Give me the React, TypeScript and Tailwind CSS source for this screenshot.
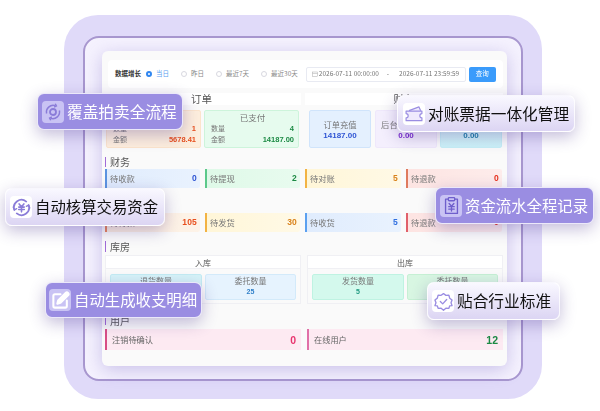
import { type ReactNode } from "react";

const numFont = "font-['Liberation_Sans',sans-serif] font-bold";

function SectionTitle({ text, className }: { text: string; className: string }) {
    return (
        <div className={`flex items-center ${className}`}>
            <div className="w-px h-full bg-[#a06bd8]" />
            <div className="ml-[4px] text-[10px] leading-none text-[#555]">{text}</div>
        </div>
    );
}

function Stat({ label, value, box, bar, color }: { label: string; value: string; box: string; bar: string; color: string }) {
    return (
        <div className={`flex items-center justify-between h-full border-l-2 pl-[3px] pr-[3px] rounded-r-[2px] ${box} ${bar}`}>
            <span className="text-[8.3px] leading-none text-[#777]">{label}</span>
            <span className={`text-[8.5px] tracking-[0.2px] leading-none ${numFont} ${color}`}>{value}</span>
        </div>
    );
}

function Radio({ text, active }: { text: string; active?: boolean }) {
    return (
        <div className="flex items-center gap-[4px]">
            {active ? (
                <div className="w-[6px] h-[6px] rounded-full border-2 border-[#2f86f0] bg-white" />
            ) : (
                <div className="w-[6px] h-[6px] rounded-full border border-[#d8d8e0] bg-white" />
            )}
            <span className={active ? "text-[6.5px] text-[#5aa0f0]" : "text-[6.5px] text-[#888]"}>{text}</span>
        </div>
    );
}

function Badge({ text, icon, className, purple }: { text: string; icon: ReactNode; className: string; purple?: boolean }) {
    return (
        <div
            className={`absolute flex items-center rounded-[7px] border border-white/80 shadow-[0_5px_16px_rgba(70,50,140,0.32)] ${
                purple ? "bg-[#9a8de2] text-white" : "bg-linear-to-b from-[#f9f8ff] to-[#dcd5f3] text-[#111]"
            } ${className}`}
        >
            <div
                className={`flex items-center justify-center w-[22px] h-[22px] rounded-[4px] ${
                    purple ? "bg-[#c9c3f4]" : "bg-white"
                }`}
            >
                {icon}
            </div>
            <span className="ml-[3px] leading-none whitespace-nowrap">{text}</span>
        </div>
    );
}

function CycleIcon() {
    return (
        <svg width="18" height="18" viewBox="0 0 24 24" fill="none" stroke="#8a7cd8" strokeWidth="2">
            <circle cx="12" cy="12" r="4" strokeWidth="2.4" />
            <path d="M3.5 14a9 9 0 0 1 11.5-10.5" />
            <path d="M20.5 10a9 9 0 0 1-11.5 10.5" />
            <path d="M15 1l1.5 3-3 1.5" />
            <path d="M9 23l-1.5-3 3-1.5" />
        </svg>
    );
}

function WalletIcon() {
    return (
        <svg width="20" height="20" viewBox="0 0 24 24" fill="#efeafd" stroke="#9a8de2" strokeWidth="1.4" strokeLinejoin="round">
            <path d="M6 8 18 3.5 20 8" />
            <path d="M2.5 8.5h19v3a2.2 2.2 0 0 0 0 5V20h-19v-3.5a2.2 2.2 0 0 0 0-5z" />
        </svg>
    );
}

function MoneyIcon() {
    return (
        <svg width="19" height="19" viewBox="0 0 24 24" fill="none" stroke="#8a7cd8" strokeWidth="2.2" strokeLinecap="round">
            <path d="M3 15a9.5 9.5 0 0 1 15-10.5" />
            <path d="M21 9a9.5 9.5 0 0 1-15 10.5" />
            <path d="M9 7.5l3 3.5 3-3.5M8.5 11.5h7M8.5 14.5h7M12 11v6.5" strokeWidth="2" />
            <path d="M1.5 11.5 3 15l3-1.5M22.5 12.5 21 9l-3 1.5" strokeWidth="1.6" />
        </svg>
    );
}

function ClipboardIcon() {
    return (
        <svg width="19" height="19" viewBox="0 0 24 24" fill="none" stroke="#6f5fcc" strokeWidth="1.7" strokeLinecap="round" strokeLinejoin="round">
            <path d="M8 4H4.5v18h15V4H16" />
            <rect x="8" y="2" width="8" height="4" rx="1" />
            <path d="M9 9.5l3 3.5 3-3.5M8.5 13.5h7M8.5 16.5h7M12 13v6" />
        </svg>
    );
}

function EditIcon() {
    return (
        <svg width="19" height="19" viewBox="0 0 24 24" fill="none" stroke="#ffffff" strokeWidth="2.6" strokeLinecap="round" strokeLinejoin="round">
            <path d="M12 4H5a2 2 0 0 0-2 2v13a2 2 0 0 0 2 2h13a2 2 0 0 0 2-2v-7" />
            <path d="M18.5 2.5a2 2 0 0 1 3 3L12 15l-4 1 1-4z" fill="#ffffff" />
        </svg>
    );
}

function CheckIcon() {
    return (
        <svg width="19" height="19" viewBox="0 0 24 24" fill="none" stroke="#9a8de2" strokeWidth="1.7" strokeLinecap="round" strokeLinejoin="round">
            <path d="M12 2l3 2.3 3.8-.2 1 3.7 3 2.3-1.3 3.6 1.3 3.5-3 .3-1 3.1-3.8-.1L12 23l-3-2.5-3.8.1-1-3.1-3-.3 1.3-3.5L1.2 10l3-2.3 1-3.7 3.8.2z" />
            <path d="M8 12l3 3 5-5.5" />
        </svg>
    );
}

export default function App() {
    return (
        <div className="relative w-[600px] h-[411px] overflow-hidden bg-white pt-[15px] pl-[64px] font-['Noto_Sans_CJK_SC',sans-serif]">
            <div className="w-[478px] h-[384px] rounded-[34px] bg-[#e0daf9] pt-[21px] pl-[19px]">
                <div className="w-[440px] h-[345px] rounded-[16px] border-2 border-[#a897cf] bg-[#f5f2fe] pt-[13px] pl-[17px]">
                    <div className="flex flex-col w-[405px] h-[315px] rounded-[6px] bg-[#fafafa] pl-[3px] shadow-[0_4px_18px_rgba(110,90,190,0.32)] blur-[0.4px]">
                        {/* filter bar */}
                        <div className="flex items-center mt-[9px] ml-[3px] w-[395px] h-[28px] shrink-0 rounded-[4px] bg-white pl-[7px]">
                            <span className="w-[31px] text-[6.5px] font-bold text-[#333]">数据增长</span>
                            <div className="flex items-center gap-[12px]">
                                <Radio text="当日" active />
                                <Radio text="昨日" />
                                <Radio text="最近7天" />
                                <Radio text="最近30天" />
                            </div>
                            <div className="flex items-center ml-[8px] w-[160px] h-[15px] rounded-[2px] border border-[#e8eaf2] pl-[5px] text-[6.5px] text-[#777]">
                                <svg width="6" height="6" viewBox="0 0 12 12" fill="none" stroke="#aaa">
                                    <rect x="1" y="2" width="10" height="9" />
                                    <path d="M1 5h10" />
                                </svg>
                                <span className="ml-[1px] w-[68px]">2026-07-11 00:00:00</span>
                                <span>-</span>
                                <span className="ml-[10px]">2026-07-11 23:59:59</span>
                            </div>
                            <div className="flex items-center justify-center ml-[3px] w-[27px] h-[15px] rounded-[2px] bg-[#3a9bfb] text-[6.5px] text-white">查询</div>
                        </div>

                        {/* order and finance heads */}
                        <div className="flex gap-[4px] mt-[5px] h-[12px] shrink-0">
                            <div className="flex items-center justify-center w-[196px] bg-white text-[10.5px] text-[#555] pr-[3px]">订单</div>
                            <div className="flex items-center justify-center w-[198px] bg-white text-[10.5px] text-[#555]">财务</div>
                        </div>
                        <div className="flex mt-[5px] h-[38px] shrink-0">
                            <div className="flex flex-col ml-[1px] w-[95px] rounded-[2px] border border-[#fbe4cc] bg-[#fdeedd] pl-[6px] pr-[4px] text-[7px] text-[#777]">
                                <div className="text-center text-[8.5px] leading-[12px]">待支付</div>
                                <div className="flex justify-between leading-[11px]"><span>数量</span><span className={`text-[7.5px] ${numFont} text-[#e8501e]`}>1</span></div>
                                <div className="flex justify-between leading-[11px]"><span>金额</span><span className={`text-[7.5px] ${numFont} text-[#e8501e]`}>5678.41</span></div>
                            </div>
                            <div className="flex flex-col ml-[3px] w-[95px] rounded-[2px] border border-[#cdf4db] bg-[#e6fbee] pl-[6px] pr-[4px] text-[7px] text-[#777]">
                                <div className="text-center text-[8.5px] leading-[12px]">已支付</div>
                                <div className="flex justify-between leading-[11px]"><span>数量</span><span className={`text-[7.5px] ${numFont} text-[#1c8a44]`}>4</span></div>
                                <div className="flex justify-between leading-[11px]"><span>金额</span><span className={`text-[7.5px] ${numFont} text-[#1c8a44]`}>14187.00</span></div>
                            </div>
                            <div className="flex flex-col items-center justify-center ml-[10px] w-[62px] rounded-[2px] border border-[#d0e4fb] bg-[#e4f0fe]">
                                <span className="text-[8.3px] leading-[12px] text-[#777]">订单充值</span>
                                <span className={`text-[8px] leading-[11px] ${numFont} text-[#2f55d4]`}>14187.00</span>
                            </div>
                            <div className="flex flex-col items-center justify-center ml-[4px] w-[62px] rounded-[2px] border border-[#efe8fb] bg-[#f4effd]">
                                <span className="text-[8.3px] leading-[12px] text-[#777]">后台创建充值</span>
                                <span className={`text-[8px] leading-[11px] ${numFont} text-[#7a2bd0]`}>0.00</span>
                            </div>
                            <div className="flex flex-col items-center justify-center ml-[3px] w-[62px] rounded-[2px] border border-[#c6eff6] bg-linear-to-b from-[#e0f6fb] to-[#ccf2f8]">
                                <span className="text-[8.3px] leading-[12px] text-[#777]">累计充值</span>
                                <span className={`text-[8px] leading-[11px] ${numFont} text-[#1a7fa8]`}>0.00</span>
                            </div>
                        </div>

                        {/* finance */}
                        <SectionTitle text="财务" className="mt-[9px] h-[10px] shrink-0" />
                        <div className="grid grid-cols-[95px_95px_96px_96px] gap-x-[5px] mt-[2px] h-[19px] shrink-0">
                            <Stat label="待收款" value="0" box="bg-linear-to-r from-[#e0ecfd] to-[#e9f2fe]" bar="border-[#5b93e0]" color="text-[#2f55d4]" />
                            <Stat label="待提现" value="2" box="bg-linear-to-r from-[#dff9e8] to-[#e8fbef]" bar="border-[#5cc98a]" color="text-[#1c8a44]" />
                            <Stat label="待对账" value="5" box="bg-linear-to-r from-[#fff6d8] to-[#fff9e6]" bar="border-[#f2b344]" color="text-[#d9821a]" />
                            <Stat label="待退款" value="0" box="bg-linear-to-r from-[#fde4e2] to-[#fdeceb]" bar="border-[#df7a5e]" color="text-[#e8321e]" />
                        </div>
                        <SectionTitle text="订单" className="mt-[3px] h-[20px] shrink-0" />
                        <div className="grid grid-cols-[95px_95px_96px_96px] gap-x-[5px] mt-[2px] h-[19px] shrink-0">
                            <Stat label="待付款" value="105" box="bg-linear-to-r from-[#fdeedd] to-[#fdf3e8]" bar="border-[#e8845a]" color="text-[#e8501e]" />
                            <Stat label="待发货" value="30" box="bg-linear-to-r from-[#fff6d8] to-[#fff9e6]" bar="border-[#f2b344]" color="text-[#d9821a]" />
                            <Stat label="待收货" value="5" box="bg-linear-to-r from-[#e0ecfd] to-[#e9f2fe]" bar="border-[#5ba0f0]" color="text-[#2f6fe0]" />
                            <Stat label="待退款" value="0" box="bg-linear-to-r from-[#fde4e2] to-[#fdeceb]" bar="border-[#e0606a]" color="text-[#e8321e]" />
                        </div>

                        {/* warehouse */}
                        <SectionTitle text="库房" className="mt-[9px] h-[11px] shrink-0" />
                        <div className="flex gap-[6px] mt-[3px] h-[49px] shrink-0">
                            <div className="flex flex-col w-[196px] border border-[#f0f0f4]">
                                <div className="h-[13px] shrink-0 bg-white border-b border-[#f0f0f4] text-center text-[8px] leading-[13px] text-[#555]">入库</div>
                                <div className="flex gap-[3px] mt-[5px] pl-[4px]">
                                    <div className="flex flex-col items-center w-[92px] h-[26px] rounded-[2px] border border-[#c4ecf3] bg-[#d6f3f8] text-[8px] leading-[12px] text-[#777]">
                                        <span>退货数量</span>
                                        <span className={`text-[7px] leading-[9px] ${numFont} text-[#2a8fb0]`}>0</span>
                                    </div>
                                    <div className="flex flex-col items-center w-[91px] h-[26px] rounded-[2px] border border-[#d3eafa] bg-[#e6f3fe] text-[8px] leading-[12px] text-[#777]">
                                        <span>委托数量</span>
                                        <span className={`text-[7px] leading-[9px] ${numFont} text-[#2f7fc8]`}>25</span>
                                    </div>
                                </div>
                            </div>
                            <div className="flex flex-col w-[196px] border border-[#f0f0f4]">
                                <div className="h-[13px] shrink-0 bg-white border-b border-[#f0f0f4] text-center text-[8px] leading-[13px] text-[#555]">出库</div>
                                <div className="flex gap-[3px] mt-[5px] pl-[4px]">
                                    <div className="flex flex-col items-center w-[92px] h-[26px] rounded-[2px] border border-[#bff3e2] bg-[#d4f9ed] text-[8px] leading-[12px] text-[#777]">
                                        <span>发货数量</span>
                                        <span className={`text-[7px] leading-[9px] ${numFont} text-[#1f9a80]`}>5</span>
                                    </div>
                                    <div className="flex flex-col items-center w-[91px] h-[26px] rounded-[2px] border border-[#c6f0d4] bg-[#d8f6e2] text-[8px] leading-[12px] text-[#777]">
                                        <span>委托数量</span>
                                        <span className={`text-[7px] leading-[9px] ${numFont} text-[#1c8a44]`}>0</span>
                                    </div>
                                </div>
                            </div>
                        </div>

                        {/* users */}
                        <SectionTitle text="用户" className="mt-[12px] h-[9px] shrink-0" />
                        <div className="flex gap-[6px] mt-[4px] h-[21px] shrink-0">
                            <div className="flex items-center justify-between w-[196px] border-l-2 border-[#d84f86] bg-[#fdeaf2] pl-[5px] pr-[5px]">
                                <span className="text-[8.2px] text-[#666]">注销待确认</span>
                                <span className={`text-[10.5px] pt-[2px] ${numFont} text-[#e8346e]`}>0</span>
                            </div>
                            <div className="flex items-center justify-between w-[196px] border-l-2 border-[#e070a8] bg-[#fdeaf2] pl-[5px] pr-[5px]">
                                <span className="text-[8.2px] text-[#666]">在线用户</span>
                                <span className={`text-[10.5px] pt-[2px] ${numFont} text-[#1c8a44]`}>12</span>
                            </div>
                        </div>
                    </div>
                </div>
            </div>

            <Badge text="覆盖拍卖全流程" icon={<CycleIcon />} purple className="left-[37px] top-[93px] w-[146px] h-[37px] pl-[4px] text-[15.7px]" />
            <Badge text="对账票据一体化管理" icon={<WalletIcon />} className="left-[397px] top-[95px] w-[178px] h-[37px] pl-[5px] text-[15.7px]" />
            <Badge text="自动核算交易资金" icon={<MoneyIcon />} className="left-[5px] top-[188px] w-[160px] h-[38px] pl-[4px] text-[15.4px]" />
            <Badge text="资金流水全程记录" icon={<ClipboardIcon />} purple className="left-[435px] top-[187px] w-[159px] h-[37px] pl-[4px] text-[15.4px]" />
            <Badge text="自动生成收支明细" icon={<EditIcon />} purple className="left-[45px] top-[282px] w-[157px] h-[36px] pl-[3px] text-[15.4px]" />
            <Badge text="贴合行业标准" icon={<CheckIcon />} className="left-[427px] top-[282px] w-[133px] h-[38px] pl-[4px] text-[15.7px]" />
        </div>
    );
}
